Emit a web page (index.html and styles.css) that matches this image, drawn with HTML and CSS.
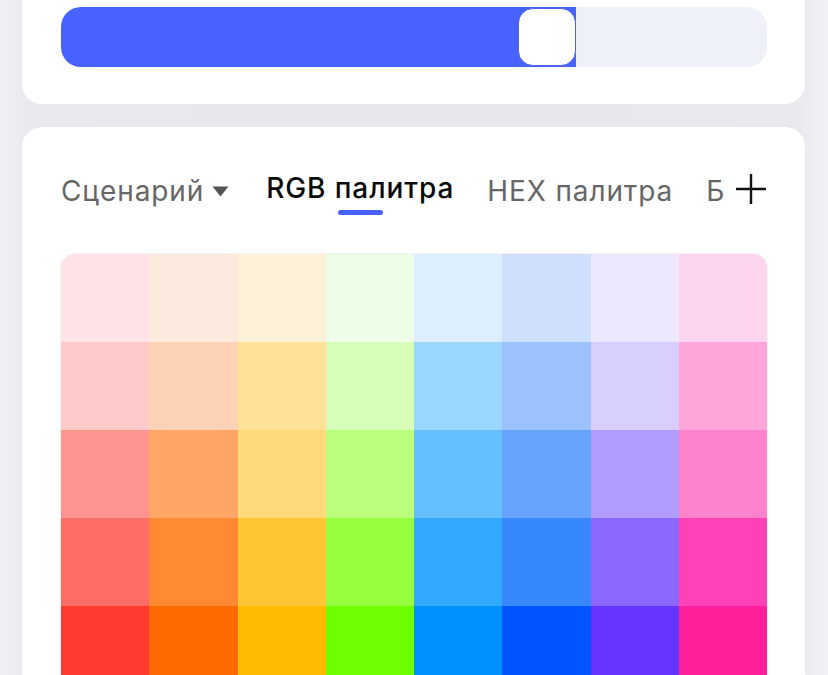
FILE: index.html
```html
<!DOCTYPE html>
<html lang="ru">
<head>
<meta charset="utf-8">
<title>Palette</title>
<link rel="stylesheet" href="styles.css">
</head>
<body>
<div class="page">
  <section class="card card-slider">
    <div class="track">
      <div class="fill" style="width: 515px"></div>
      <div class="knob" style="left: 457px"></div>
    </div>
  </section>

  <section class="card card-palette">
    <div class="tabs-row">
      <div class="tabs">
        <div class="tab tab-drop">Сценарий
          <svg class="caret" width="17" height="11" viewBox="0 0 17 11"><polygon points="0.5,0.5 16.5,0.5 8.5,10.5" fill="#555"/></svg>
        </div>
        <div class="tab tab-active">
          <span>RGB палитра</span>
          <i class="indicator"></i>
        </div>
        <div class="tab">HEX палитра</div>
        <div class="tab">Б</div>
      </div>
      <svg class="plus" width="32" height="32" viewBox="0 0 32 32"><path d="M16 1V31M1 16H31" stroke="#111" stroke-width="2.4" fill="none"/></svg>
    </div>

    <div class="palette">
      <div class="cell" style="background:#ffe3e6"></div>
      <div class="cell" style="background:#fdeade"></div>
      <div class="cell" style="background:#fff0d8"></div>
      <div class="cell" style="background:#eefde5"></div>
      <div class="cell" style="background:#ddeeff"></div>
      <div class="cell" style="background:#cfe0fe"></div>
      <div class="cell" style="background:#ede8fe"></div>
      <div class="cell" style="background:#fed5ee"></div>

      <div class="cell" style="background:#ffcaca"></div>
      <div class="cell" style="background:#fed2b4"></div>
      <div class="cell" style="background:#ffe198"></div>
      <div class="cell" style="background:#d7ffb9"></div>
      <div class="cell" style="background:#9ad6ff"></div>
      <div class="cell" style="background:#9bc2ff"></div>
      <div class="cell" style="background:#d8cfff"></div>
      <div class="cell" style="background:#fea5da"></div>

      <div class="cell" style="background:#ff9390"></div>
      <div class="cell" style="background:#ffa566"></div>
      <div class="cell" style="background:#ffda7b"></div>
      <div class="cell" style="background:#baff7b"></div>
      <div class="cell" style="background:#66bfff"></div>
      <div class="cell" style="background:#66a3ff"></div>
      <div class="cell" style="background:#b09cff"></div>
      <div class="cell" style="background:#ff82cc"></div>

      <div class="cell" style="background:#ff6b66"></div>
      <div class="cell" style="background:#ff8a33"></div>
      <div class="cell" style="background:#ffc634"></div>
      <div class="cell" style="background:#96ff3f"></div>
      <div class="cell" style="background:#33a8ff"></div>
      <div class="cell" style="background:#3787ff"></div>
      <div class="cell" style="background:#8b66ff"></div>
      <div class="cell" style="background:#ff41b7"></div>

      <div class="cell" style="background:#ff3b30"></div>
      <div class="cell" style="background:#ff6a00"></div>
      <div class="cell" style="background:#ffbb00"></div>
      <div class="cell" style="background:#6fff00"></div>
      <div class="cell" style="background:#0091ff"></div>
      <div class="cell" style="background:#0055ff"></div>
      <div class="cell" style="background:#6633ff"></div>
      <div class="cell" style="background:#ff1f99"></div>
    </div>
  </section>
</div>
</body>
</html>
```

FILE: styles.css
```css
* { box-sizing: border-box; }

html, body {
  margin: 0;
  padding: 0;
}

body {
  width: 828px;
  height: 675px;
  overflow: hidden;
  background: linear-gradient(90deg, #f1f1f4 0px, #e9e9ed 30px, #e8e8ec 50%, #e9e9ed 798px, #f2f2f5 828px);
  font-family: Inter, "Noto Sans", "Liberation Sans", sans-serif;
}

.page {
  padding: 0 23px 0 22px;
}

.card {
  background: #fff;
  border-radius: 20px;
}

.card-slider {
  margin-top: -20px;
  padding: 27px 38px 37px 39px;
}

.track {
  position: relative;
  height: 60px;
  border-radius: 20px;
  background: #eef1f8;
}

.fill {
  height: 60px;
  border-radius: 20px 0 0 20px;
  background: #4862ff;
}

.knob {
  position: absolute;
  top: 1px;
  width: 58px;
  height: 58px;
  border-radius: 15px;
  background: #fff;
  border: 1.5px solid #4f62ee;
}

.card-palette {
  margin-top: 23px;
  padding: 44px 38px 0 39px;
  height: 700px;
}

.tabs-row {
  display: flex;
  align-items: flex-start;
  height: 83px;
}

.tabs {
  flex: 1;
  display: flex;
  align-items: flex-start;
  gap: 33px;
  overflow: hidden;
  white-space: nowrap;
}

.tab {
  font-size: 28px;
  line-height: 34px;
  color: #666;
  letter-spacing: 0.9px;
  padding-top: 3px;
}

.tab-drop {
  display: flex;
  align-items: center;
  gap: 8px;
  margin-right: 4px;
}

.caret {
  display: block;
  margin-top: 1px;
}

.tab-active {
  display: flex;
  flex-direction: column;
  align-items: center;
  color: #0a0a0a;
  font-weight: 500;
  padding-top: 0;
  letter-spacing: 0.9px;
}

.indicator {
  display: block;
  width: 45px;
  height: 5px;
  border-radius: 3px;
  background: #4862ff;
  margin-top: 5px;
}

.plus {
  display: block;
  flex: none;
  margin-top: 2px;
  margin-left: 6px;
}

.palette {
  display: grid;
  grid-template-columns: repeat(8, 1fr);
  grid-auto-rows: 88px;
  border-radius: 14px 14px 0 0;
  overflow: hidden;
  box-shadow: 0 0 0 1px #f3f3f3;
}

.cell {
  min-width: 0;
}
```
